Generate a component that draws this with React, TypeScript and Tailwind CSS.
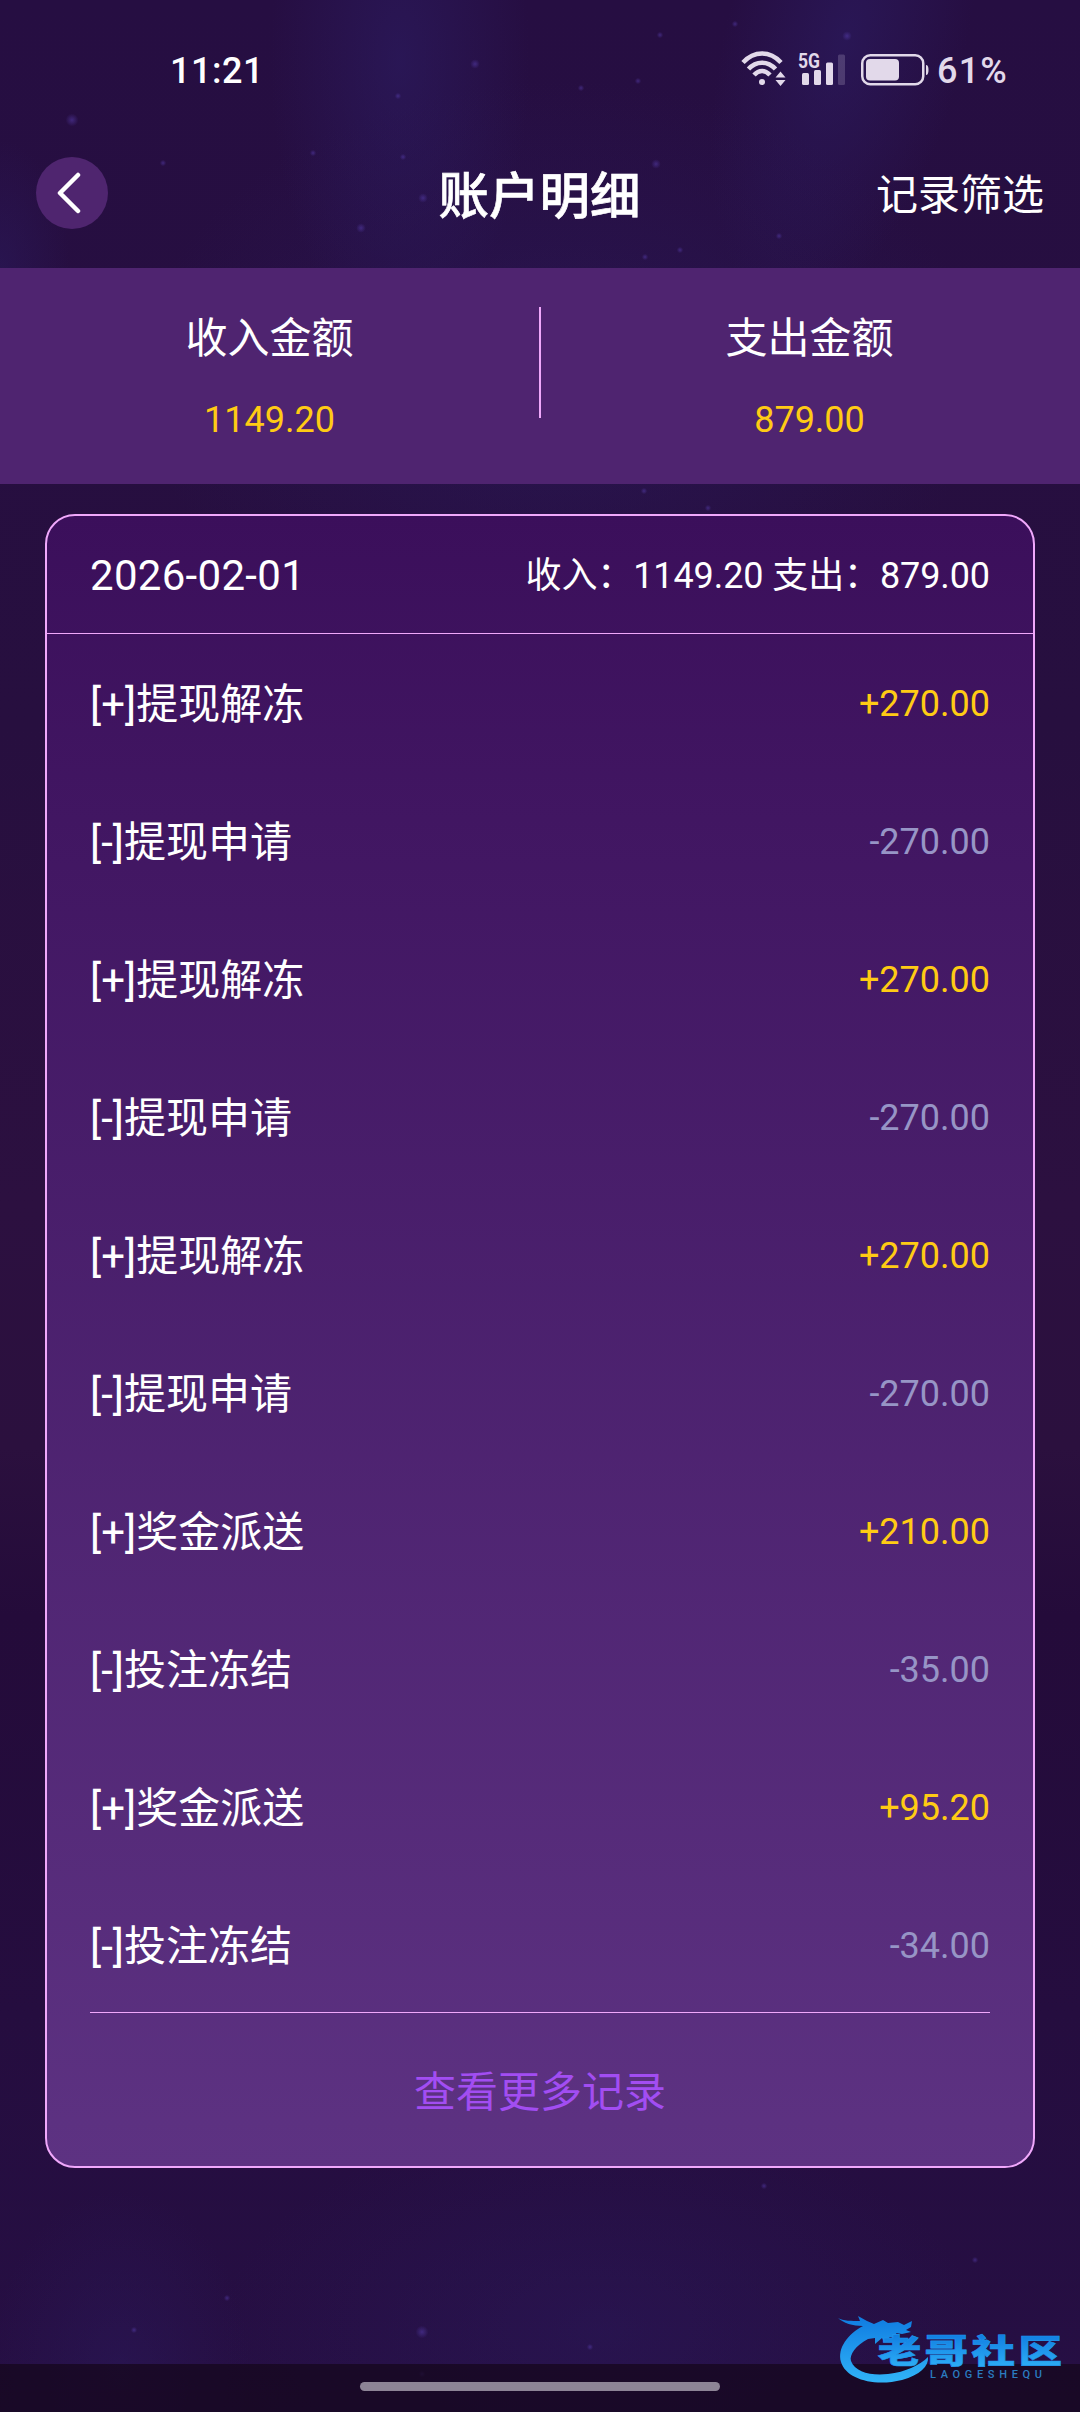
import React from 'react';
import { clsx } from 'clsx';

interface RecordItem {
  id: number;
  type: 'in' | 'out';
  title: string;
  amount: string;
}

const RECORDS: RecordItem[] = [
  { id: 1, type: 'in', title: '提现解冻', amount: '270.00' },
  { id: 2, type: 'out', title: '提现申请', amount: '270.00' },
  { id: 3, type: 'in', title: '提现解冻', amount: '270.00' },
  { id: 4, type: 'out', title: '提现申请', amount: '270.00' },
  { id: 5, type: 'in', title: '提现解冻', amount: '270.00' },
  { id: 6, type: 'out', title: '提现申请', amount: '270.00' },
  { id: 7, type: 'in', title: '奖金派送', amount: '210.00' },
  { id: 8, type: 'out', title: '投注冻结', amount: '35.00' },
  { id: 9, type: 'in', title: '奖金派送', amount: '95.20' },
  { id: 10, type: 'out', title: '投注冻结', amount: '34.00' },
];

const STARS = [
  [72, 120, 4], [475, 64, 3], [398, 96, 2], [581, 88, 2], [638, 81, 2], [847, 36, 3], [735, 24, 2],
  [660, 35, 2], [361, 228, 3], [423, 198, 3], [403, 157, 2], [656, 164, 3], [779, 236, 2], [680, 250, 2],
  [645, 257, 2], [313, 153, 2], [163, 163, 2], [644, 491, 2], [708, 508, 2], [422, 2332, 4],
  [422, 2374, 2], [590, 2347, 2], [227, 2298, 2], [134, 2330, 2], [975, 2260, 2], [764, 2186, 2],
];

const Backdrop = () => (
  <svg className="absolute inset-0 h-full w-full" viewBox="0 0 1080 2412" preserveAspectRatio="none">
    <defs>
      <linearGradient id="base" x1="0" y1="0" x2="0" y2="1">
        <stop offset="0" stopColor="#260e42" />
        <stop offset="0.3" stopColor="#270f3f" />
        <stop offset="0.5" stopColor="#2c1040" />
        <stop offset="0.6" stopColor="#2b103e" />
        <stop offset="0.67" stopColor="#240b3a" />
        <stop offset="1" stopColor="#260f44" />
      </linearGradient>
      <radialGradient id="glow">
        <stop offset="0" stopColor="#2c1c62" stopOpacity="0.75" />
        <stop offset="1" stopColor="#2c1c62" stopOpacity="0" />
      </radialGradient>
      <radialGradient id="star">
        <stop offset="0" stopColor="#5a40b4" stopOpacity="0.5" />
        <stop offset="1" stopColor="#5a40b4" stopOpacity="0" />
      </radialGradient>
    </defs>
    <rect width="1080" height="2412" fill="url(#base)" />
    <ellipse cx="400" cy="60" rx="130" ry="280" fill="url(#glow)" opacity="0.8" />
    <ellipse cx="845" cy="40" rx="120" ry="280" fill="url(#glow)" opacity="0.8" transform="rotate(14 845 40)" />
    <ellipse cx="560" cy="380" rx="420" ry="300" fill="url(#glow)" opacity="0.6" />
    <ellipse cx="0" cy="270" rx="70" ry="130" fill="url(#glow)" opacity="0.6" />
    <ellipse cx="600" cy="2330" rx="380" ry="210" fill="url(#glow)" opacity="0.5" />
    <ellipse cx="120" cy="2370" rx="130" ry="180" fill="url(#glow)" opacity="0.5" />
    {STARS.map(([x, y, r], i) => (
      <circle key={i} cx={x} cy={y} r={r * 1.6} fill="url(#star)" />
    ))}
  </svg>
);

const StatusBar = () => (
  <div className="flex h-[138px] items-center justify-between pl-[170px] pr-[72px] text-[36px] font-medium text-white">
    <span className="mt-[3px] leading-none tracking-[0.5px]">11:21</span>
    <div className="flex items-center text-[#e2d9ea]">
      <svg width="46" height="36" viewBox="0 0 46 36" fill="none" stroke="currentColor" strokeWidth="4.5">
        <path d="M2 11.5C13-.5 29-.5 40 11.5" />
        <path d="M7.5 18C15 9.5 27 9.5 34.5 18" />
        <path d="M13 24C18 18.500 24 18.500 29 24" />
        <circle cx="21" cy="31" r="3" fill="currentColor" stroke="none" />
        <path d="M34.500 26.500L39.500 20.500L44.500 26.500ZM34.500 29L44.500 29L39.500 35Z" fill="currentColor" stroke="none" />
      </svg>
      <svg className="ml-[11px] overflow-visible" width="48" height="36" viewBox="0 0 48 36" fill="currentColor">
        <text x="0" y="16.500" fontSize="20.500" fontWeight="700" textLength="22" lengthAdjust="spacingAndGlyphs">5G</text>
        <rect x="4" y="22" width="7" height="12" rx="1.500" />
        <rect x="16" y="19" width="7" height="15" rx="1.500" />
        <rect x="28" y="11.500" width="7" height="22.500" rx="1.500" />
        <rect x="40" y="3.500" width="7" height="30.500" rx="1.500" opacity="0.2" />
      </svg>
      <svg className="ml-[15px] mt-[1px]" width="68" height="32" viewBox="0 0 68 32" fill="none">
        <rect x="1.250" y="1.250" width="61" height="29" rx="8" stroke="currentColor" strokeWidth="2.500" />
        <rect x="5" y="5" width="33" height="21.500" rx="4" fill="currentColor" />
        <path d="M65 11Q67.500 11 67.500 16T65 21Z" fill="currentColor" />
      </svg>
      <span className="ml-[8px] mt-[3px] leading-none tracking-[1.2px]">61%</span>
    </div>
  </div>
);

const Summary = ({ label, value }: { label: string; value: string }) => (
  <div className="flex flex-1 flex-col items-center pr-px pt-[40px]">
    <span className="text-[42px] leading-[62px] text-white">{label}</span>
    <span className="mt-[29px] text-[36px] leading-[42px] text-[#ffcb14]">{value}</span>
  </div>
);

const Watermark = () => (
  <svg className="absolute bottom-[20px] right-[18px] overflow-visible" width="224" height="80" viewBox="0 0 224 80">
    <defs>
      <linearGradient id="dragon" x1="0" y1="0" x2="0" y2="1">
        <stop offset="0" stopColor="#0f7be0" />
        <stop offset="1" stopColor="#31b4f8" />
      </linearGradient>
    </defs>
    <path
      fill="url(#dragon)"
      d="M0 6C5 9 14 9 22 9L20 4L29 9L36 12L45 8L50 11L60 10L66 13L74 9L73 15L68 18L73 20L64 22L58 21L61 27L52 25L46 30L44 26L37 32L37 26L30 27C18 33 11 43 13 49C17 60 33 64 50 62C68 60 82 53 90 45C91 54 82 63 64 68C36 75 8 67 3 50C-1 36 10 22 25 14C15 14 5 11 0 6Z"
    />
    <text
      x="30.500"
      y="51.500"
      transform="scale(1.3 1)"
      fontSize="33.500"
      fontWeight="900"
      letterSpacing="2.600"
      fill="url(#dragon)"
      stroke="#2196ec"
      strokeWidth="0.600"
    >
      老哥社区
    </text>
    <text x="92" y="65.500" fontSize="11" fontWeight="500" textLength="112" fill="#2a7cc0">LAOGESHEQU</text>
  </svg>
);

export default function App() {
  return (
    <div className="relative h-[2412px] w-[1080px] overflow-hidden bg-[#260e42] font-[Roboto,'Noto_Sans_CJK_SC',sans-serif]">
      <Backdrop />

      <div className="relative flex h-full flex-col">
        <StatusBar />

        {/* Nav bar */}
        <header className="grid h-[130px] grid-cols-3 items-center px-[36px] pb-[20px] text-white">
          <button className="flex h-[72px] w-[72px] items-center justify-center rounded-full bg-[#4f256f] pr-[5px]">
            <svg width="26" height="44" viewBox="0 0 26 44" fill="none" stroke="white" strokeWidth="4.5" strokeLinecap="round" strokeLinejoin="round">
              <path d="M21 4L3 22L21 40" />
            </svg>
          </button>
          <h1 className="mt-[8px] pr-px text-center text-[50.5px] font-medium leading-[60px] [-webkit-text-stroke:0.6px_white]">账户明细</h1>
          <span className="mt-[6px] text-right text-[42px] leading-[60px]">记录筛选</span>
        </header>

        {/* Totals */}
        <section className="flex h-[216px] shrink-0 bg-[#4f2470]">
          <Summary label="收入金额" value="1149.20" />
          <div className="-mx-px mt-[39px] h-[111px] w-[2px] bg-[#f0a8fb]" />
          <Summary label="支出金额" value="879.00" />
        </section>

        {/* Daily card */}
        <section className="mx-[45px] mt-[30px] flex h-[1654px] shrink-0 flex-col rounded-[30px] border-2 border-[#f0a8fb] bg-gradient-to-b from-[#3b0f5b] to-[#5d3282]">
          <div className="flex h-[118px] shrink-0 items-center justify-between border-b border-[#f0a8fb] px-[43px] pt-[2px] text-white">
            <span className="text-[42px] tracking-[0.3px]">2026-02-01</span>
            <span className="text-[36px] tracking-[-0.1px]">收入：1149.20 支出：879.00</span>
          </div>

          <div className="mx-[43px] h-[1379px] shrink-0 border-b border-[#f0a8fb] pt-px">
            {RECORDS.map((r) => (
              <div key={r.id} className="flex h-[138px] items-center justify-between">
                <span className="text-[42px] text-white">
                  [{r.type === 'in' ? '+' : '-'}]{r.title}
                </span>
                <span className={clsx('text-[36px]', r.type === 'in' ? 'text-[#ffcb14]' : 'text-[#9795c6]')}>
                  {r.type === 'in' ? '+' : '-'}
                  {r.amount}
                </span>
              </div>
            ))}
          </div>

          <button className="flex flex-1 items-center justify-center pt-[5px] text-[42px] text-[#a24df2]">查看更多记录</button>
        </section>

        {/* System gesture bar */}
        <div className="mt-auto flex h-[48px] shrink-0 justify-center bg-[#16081f]/80 pt-[18px]">
          <div className="h-[9px] w-[360px] rounded-full bg-[#8d8496]" />
        </div>
      </div>

      <Watermark />
    </div>
  );
}
